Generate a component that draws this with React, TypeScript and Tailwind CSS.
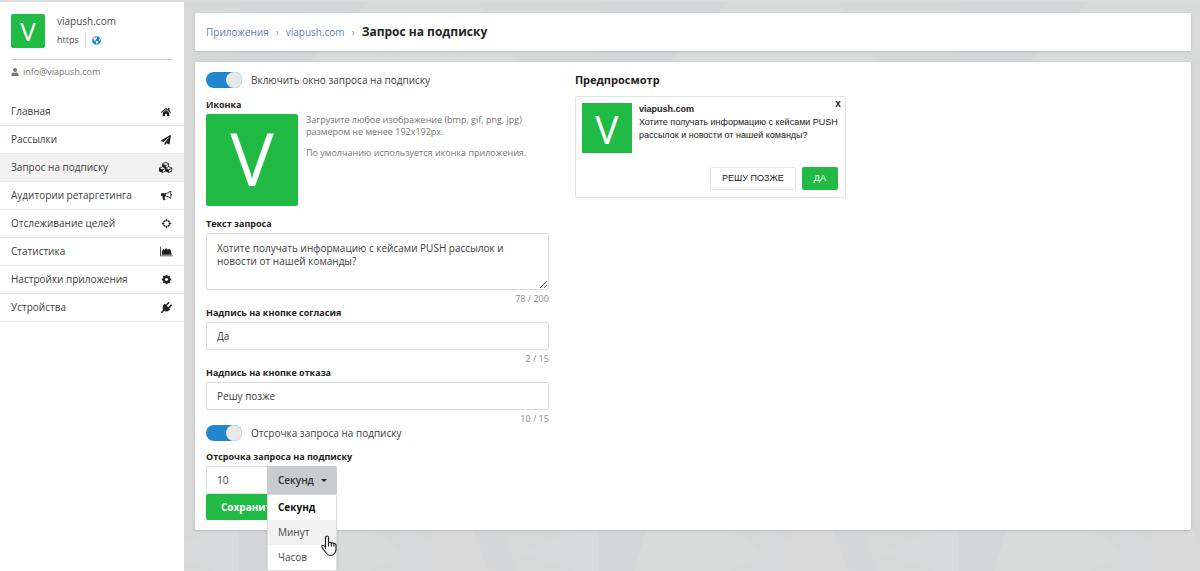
import { useState } from "react";
import type { ReactNode } from "react";
import { FaGlobeAmericas, FaHome, FaPaperPlane, FaUser } from "react-icons/fa";

const svgIcon = (viewBox: string, d: string, className: string) => (
  <svg viewBox={viewBox} fill="currentColor" className={className} aria-hidden="true">
    <path d={d} />
  </svg>
);

const cubes = svgIcon(
  "0 0 2304 1792",
  "M640 1632l384-192v-314l-384 164v342zm-64-454l404-173-404-173-404 173zm1088 454l384-192v-314l-384 164v342zm-64-454l404-173-404-173-404 173zm-448-293l384-165v-266l-384 164v267zm-64-379l441-189-441-189-441 189zm1088 518v416q0 36-19 67t-52 47l-448 224q-25 14-57 14t-57-14l-448-224q-4-2-7-4-2 2-7 4l-448 224q-25 14-57 14t-57-14l-448-224q-33-16-52-47t-19-67v-416q0-38 21.5-70t56.5-48l434-186v-400q0-38 21.5-70t56.5-48l448-192q23-10 50-10t50 10l448 192q35 16 56.5 48t21.5 70v400l434 186q36 16 57 48t21 70z",
  "h-[11px] w-[14px]"
);

const bullhorn = svgIcon(
  "0 0 1792 1792",
  "M1664 640q53 0 90.5 37.5t37.5 90.5-37.5 90.5-90.5 37.5v384q0 52-38 90t-90 38q-417-347-812-380-58 19-91 66t-31 100.5 40 92.5q-20 33-23 65.5t6 58 33.5 55 48 50 61.5 50.5q-29 58-111.5 83t-168.5 11.5-132-55.5q-7-23-29.5-87.5t-32-94.5-23-89-15-101 3.5-98 22-110.5h-122q-66 0-113-47t-47-113v-192q0-66 47-113t113-47h480q435 0 896-384 52 0 90 38t38 90v384zm-128 604v-954q-394 302-768 343v270q377 42 768 341z",
  "size-[11px]"
);

const areaChart = svgIcon(
  "0 0 2048 1792",
  "M2048 1536v128h-2048v-1536h128v1408h1920zM256 1408v-500l240-420 200 160 270-320 250 300 220-160 240 160 200 780z",
  "h-[11px] w-[13px]"
);

const cog = svgIcon(
  "0 0 1792 1792",
  "M1152 896q0-106-75-181t-181-75-181 75-75 181 75 181 181 75 181-75 75-181zm512-109v222q0 12-8 23t-20 13l-185 28q-19 54-39 91 35 50 107 138 10 12 10 25t-9 23q-27 37-99 108t-94 71q-12 0-26-9l-138-108q-44 23-91 38-16 136-29 186-7 28-36 28h-222q-14 0-24.5-8.5t-11.5-21.5l-28-184q-49-16-90-37l-141 107q-10 9-25 9-14 0-25-11-126-114-165-168-7-10-7-23 0-12 8-23 15-21 51-66.5t54-70.5q-27-50-41-99l-183-27q-13-2-21-12.5t-8-23.5v-222q0-12 8-23t19-13l186-28q14-46 39-92-40-57-107-138-10-12-10-24 0-10 9-23 26-36 98.5-107.5t94.5-71.5q13 0 26 10l138 107q44-23 91-38 16-136 29-186 7-28 36-28h222q14 0 24.5 8.5t11.5 21.5l28 184q49 16 90 37l142-107q9-9 24-9 13 0 25 10 129 119 165 170 7 8 7 22 0 12-8 23-15 21-51 66.5t-54 70.5q26 50 41 98l183 28q13 2 21 12.5t8 23.5z",
  "size-[11px]"
);

const plug = svgIcon(
  "0 0 1792 1792",
  "M1755 453q37 38 37 90.5t-37 90.5l-401 400 150 150-160 160q-163 163-389.5 186.5t-411.5-100.5l-362 362h-181v-181l362-362q-124-185-100.5-411.5t186.5-389.5l160-160 150 150 400-401q38-37 91-37t90 37 37 90.5-37 90.5l-400 401 234 234 401-400q38-37 91-37t90 37z",
  "size-[11px]"
);

const crosshairs = (
  <svg viewBox="0 0 22 22" fill="none" stroke="currentColor" strokeWidth="2.8" className="size-[11px]" aria-hidden="true">
    <path d="M8.500 4.800L4.800 8.500M13.500 4.800L17.200 8.500M17.200 13.500L13.500 17.200M8.500 17.200L4.800 13.500M11 1.500V6.500M11 15.500v5M1.500 11H6.500M15.500 11h5" />
  </svg>
);

const menu: { label: string; icon: ReactNode; active?: boolean }[] = [
  { label: "Главная", icon: <FaHome className="size-[10px]" /> },
  { label: "Рассылки", icon: <FaPaperPlane className="size-[10px]" /> },
  { label: "Запрос на подписку", icon: cubes, active: true },
  { label: "Аудитории ретаргетинга", icon: bullhorn },
  { label: "Отслеживание целей", icon: crosshairs },
  { label: "Статистика", icon: areaChart },
  { label: "Настройки приложения", icon: cog },
  { label: "Устройства", icon: plug },
];

const units = ["Секунд", "Минут", "Часов"];

function Logo({ className }: { className: string }) {
  return (
    <div className={`flex shrink-0 items-center justify-center bg-[#21ba45] leading-none text-white ${className}`}>
      V
    </div>
  );
}

function Sidebar() {
  return (
    <aside className="w-[184px] shrink-0 bg-white">
      <div className="mx-[11px] flex items-end gap-3 border-b border-[#d4d4d5] pt-[9px] pb-[11px]">
        <Logo className="size-[34px] rounded-xs text-[26px]" />
        <div className="flex flex-col gap-px text-[#4a4a4a]">
          <span className="text-[10px] leading-5">viapush.com</span>
          <div className="flex items-center text-[9px] leading-4">
            <span className="border-r border-[#d4d4d5] pr-[6px]">https</span>
            <a href="#site" aria-label="Открыть сайт" className="ml-[6px] text-[#2185d0]">
              <FaGlobeAmericas className="size-[9px]" />
            </a>
          </div>
        </div>
      </div>
      <div className="mx-[11px] flex h-6 items-center gap-1 text-[9px] text-[#767676]">
        <FaUser className="size-2" />
        <span>info@viapush.com</span>
      </div>
      <nav className="mt-[14px]">
        {menu.map((item) => (
          <a
            key={item.label}
            href="#menu"
            className={`flex h-7 items-center justify-between border-b border-[#e8e8e8] px-[11px] text-[10px] text-[#3d3d3d] ${
              item.active ? "bg-[#f2f2f2]" : ""
            }`}
          >
            {item.label}
            <span className="flex w-[14px] justify-center text-[#222]">{item.icon}</span>
          </a>
        ))}
      </nav>
    </aside>
  );
}

function Toggle({ id, label }: { id: string; label: string }) {
  const [on, setOn] = useState(true);
  return (
    <div className="flex h-4 items-center gap-[9px]">
      <input
        id={id}
        type="checkbox"
        role="switch"
        checked={on}
        onChange={() => setOn(!on)}
        className="flex h-4 w-9 appearance-none justify-start rounded-full bg-[#ccc] before:size-4 before:rounded-full before:bg-[#e8e8e8] checked:justify-end checked:bg-[#2185d0]"
      />
      <label htmlFor={id} className="text-[10px] leading-4 text-[#3d3d3d]">
        {label}
      </label>
    </div>
  );
}

const labelClass = "mb-px block text-[9px] leading-4 font-bold text-[#222]";
const inputClass = "w-full rounded-xs border border-[#dededf] bg-white px-[10px] text-[10px] text-[#3d3d3d] outline-none";

function Counter({ value, max }: { value: number; max: number }) {
  return (
    <p className="mt-[3px] text-right text-[9px] leading-3 text-[#8a8a8a]">
      {value} / {max}
    </p>
  );
}

function DelayField() {
  const [unit, setUnit] = useState("Секунд");
  const [open, setOpen] = useState(true);

  return (
    <div className="flex">
      <input
        id="delay"
        type="text"
        defaultValue="10"
        className="h-7 w-[61px] rounded-l-xs border border-r-0 border-[#dededf] px-[10px] text-[10px] text-[#3d3d3d] outline-none"
      />
      <div className="relative w-[70px]">
        <select
          aria-label="Единица времени"
          value={unit}
          onChange={(e) => setUnit(e.target.value)}
          onMouseDown={(e) => {
            e.preventDefault();
            setOpen(!open);
          }}
          className="block h-7 w-full appearance-none rounded-tr-xs bg-[#cacbcd] pl-[11px] text-[10px] font-semibold text-[#333] outline-none"
        >
          {units.map((u) => (
            <option key={u}>{u}</option>
          ))}
        </select>
        <svg viewBox="0 0 10 5" className="pointer-events-none absolute top-[13px] right-[10px] h-[3px] w-[6px]" aria-hidden="true">
          <path d="M0 0h10L5 5z" fill="#222" />
        </svg>
        {open && (
          <div className="absolute top-7 left-0 z-10 w-full rounded-b-xs border border-[#dededf] bg-white shadow-sm">
            {units.map((u) => (
              <button
                key={u}
                type="button"
                onClick={() => {
                  setUnit(u);
                  setOpen(false);
                }}
                className={`block h-[25px] w-full pl-[10px] text-left text-[10px] ${
                  u === unit ? "font-bold text-[#111]" : "text-[#4a4a4a]"
                } ${u === "Минут" ? "bg-[#f2f2f2]" : ""}`}
              >
                {u}
              </button>
            ))}
            {/* Hand pointer */}
            <svg viewBox="0 0 17 22" className="pointer-events-none absolute top-[40px] -right-px h-[22px] w-[17px]" aria-hidden="true">
              <path
                d="M5.500 13.500V2.500a1.500 1.500 0 0 1 3 0V8c.4-1 2.500-1 2.800.4.500-.9 2.300-.7 2.500.6.700-.6 2.200-.2 2.200 1.200v4.300c0 2-1 3.500-2 4.500-1.500 2-5.500 2-7 0-1-1.300-2.300-2.700-3.500-4.500-1.200-1.700-2.200-2.700-1.700-3.600.9-1.200 2.500-.3 3.700 1.100z"
                fill="#fff"
                stroke="#222"
                strokeWidth="1.2"
                strokeLinejoin="round"
              />
              <path d="M8.500 8v3.500M11.300 8.500v3M13.800 9.500v2" stroke="#222" strokeWidth="1.2" fill="none" />
            </svg>
          </div>
        )}
      </div>
    </div>
  );
}

function Preview() {
  return (
    <section>
      <h2 className="text-[11px] leading-4 font-bold text-[#222]">Предпросмотр</h2>
      <div className="relative mt-2 max-w-[271px] rounded-xs border border-[#e4e4e6] pt-[6px] pr-[3px] pb-[7px] pl-[6px] font-['Liberation_Sans',sans-serif] text-[#222]">
        <div className="flex gap-[7px]">
          <Logo className="size-[50px] font-['Open_Sans',sans-serif] text-[39px]" />
          <div className="text-[9px] leading-[13px]">
            <p className="font-bold">viapush.com</p>
            <p>Хотите получать информацию с кейсами PUSH рассылок и новости от нашей команды?</p>
          </div>
        </div>
        <div className="mt-[14px] flex justify-end gap-[6px] pr-1 text-[9px]">
          <button type="button" className="h-[23px] rounded-xs border border-[#e8e8e8] px-[11px]">
            РЕШУ ПОЗЖЕ
          </button>
          <button type="button" className="h-[23px] rounded-xs bg-[#21ba45] px-3 text-white">
            ДА
          </button>
        </div>
        <button type="button" aria-label="Закрыть" className="absolute top-px right-1 text-[10px] leading-3 font-bold">
          x
        </button>
      </div>
    </section>
  );
}

function Backdrop() {
  return (
    <svg viewBox="0 0 1016 571" preserveAspectRatio="none" className="absolute inset-0 size-full" aria-hidden="true">
      <defs>
        <pattern id="facets" width="360" height="571" patternUnits="userSpaceOnUse" x="55">
          <rect width="360" height="571" fill="#d7d9d9" />
          <path d="M0 0h130l-60 60L0 90z" fill="#d4d6d7" />
          <path d="M130 0h110l40 60H70z" fill="#d9dbdb" />
          <path d="M165 528l50 25-20 18h-40z" fill="#d8d9da" />
          <path d="M260 520h-40l20 51h40z" fill="#d5d6d8" />
          <path d="M360 520l-80 33 55 18h25z" fill="#d9dadc" />
          <path d="M0 520h50l-15 51H0z" fill="#d5d6d9" />
          <path d="M50 520h70l50 35-40 16H35z" fill="#d9dbda" />
          <path d="M195 520h35l20 51h-60z" fill="#d9d9da" />
        </pattern>
      </defs>
      <rect width="1016" height="571" fill="url(#facets)" />
    </svg>
  );
}

export default function App() {
  const [text, setText] = useState("Хотите получать информацию с кейсами PUSH рассылок и новости от нашей команды?");
  const [accept, setAccept] = useState("Да");
  const [decline, setDecline] = useState("Решу позже");

  return (
    <div className="flex min-h-screen border-t-2 border-[#dcdcdc] font-['Open_Sans',sans-serif]">
      <Sidebar />
      <main className="relative flex-1 bg-[#d7d9d9]">
        <Backdrop />
        <div className="relative flex flex-col gap-[11px] py-[11px] pr-[9px] pl-[11px]">
          {/* Breadcrumbs */}
          <nav className="flex h-[38px] items-center gap-[7px] rounded-xs bg-white px-[11px] text-[10px] shadow-sm">
            <a href="#apps" className="text-[#5b83b8]">
              Приложения
            </a>
            <span className="text-[#888]">›</span>
            <a href="#app" className="text-[#5b83b8]">
              viapush.com
            </a>
            <span className="text-[#888]">›</span>
            <h1 className="text-[12px] font-bold text-[#222]">Запрос на подписку</h1>
          </nav>

          <div className="grid grid-cols-[17fr_30fr] gap-[26px] rounded-xs bg-white px-[11px] py-[10px] shadow-sm">
            <form onSubmit={(e) => e.preventDefault()}>
              <Toggle id="enabled" label="Включить окно запроса на подписку" />

              <p className={`mt-[9px] ${labelClass}`}>Иконка</p>
              <div className="mb-[10px] flex gap-2">
                <Logo className="size-[92px] rounded-xs pb-[6px] text-[73px]" />
                <div className="text-[9px] leading-3 text-[#767676]">
                  <p>
                    Загрузите любое изображение (bmp, gif, png, jpg)
                    <br />
                    размером не менее 192x192px.
                  </p>
                  <p className="mt-[9px]">По умолчанию используется иконка приложения.</p>
                </div>
              </div>

              <label htmlFor="text" className={labelClass}>
                Текст запроса
              </label>
              <textarea
                id="text"
                value={text}
                onChange={(e) => setText(e.target.value)}
                className={`block h-[57px] resize-y py-2 leading-[13px] ${inputClass}`}
              />
              <Counter value={text.length} max={200} />

              <label htmlFor="accept" className={labelClass}>
                Надпись на кнопке согласия
              </label>
              <input id="accept" value={accept} onChange={(e) => setAccept(e.target.value)} className={`block h-7 ${inputClass}`} />
              <Counter value={accept.length} max={15} />

              <label htmlFor="decline" className={labelClass}>
                Надпись на кнопке отказа
              </label>
              <input id="decline" value={decline} onChange={(e) => setDecline(e.target.value)} className={`block h-7 ${inputClass}`} />
              <Counter value={decline.length} max={15} />

              <Toggle id="delayed" label="Отсрочка запроса на подписку" />

              <label htmlFor="delay" className={`mt-2 ${labelClass}`}>
                Отсрочка запроса на подписку
              </label>
              <DelayField />
              <button type="submit" className="block h-[26px] rounded-xs bg-[#21ba45] px-[15px] text-[10px] font-bold text-white">
                Сохранить
              </button>
            </form>

            <Preview />
          </div>
        </div>
      </main>
    </div>
  );
}
